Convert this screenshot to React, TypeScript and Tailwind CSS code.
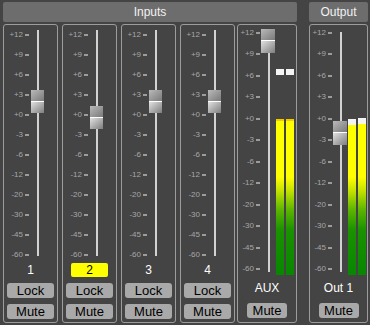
const SCALE = ['+12', '+9', '+6', '+3', '+0', '-3', '-6', '-12', '-20', '-30', '-45', '-60'];

const INPUTS = [
  { name: '1', thumb: 65, active: false },
  { name: '2', thumb: 81, active: true },
  { name: '3', thumb: 65, active: false },
  { name: '4', thumb: 65, active: false },
];

function Scale({ className }: { className: string }) {
  return (
    <div className={`flex shrink-0 flex-col justify-between ${className}`}>
      {SCALE.map((s) => (
        <div key={s} className="flex h-[12px] items-center justify-end">
          <span className="text-[8px] leading-none text-[#a6a6aa]">{s}</span>
          <span className="ml-[2px] h-[2px] w-[4px] bg-[#9c9c9c]" />
        </div>
      ))}
    </div>
  );
}

function Thumb({ top, wide }: { top: number; wide?: boolean }) {
  return (
    <div
      className={`absolute left-0 flex flex-col ${wide ? 'h-[24px] w-[14px]' : 'h-[23px] w-[13px]'}`}
      style={{ top }}
    >
      <div className="h-[11px] bg-linear-to-br from-[#bababa] to-[#7a7a7a]" />
      <div className="h-px bg-white" />
      <div className="flex-1 bg-linear-to-br from-[#e2e2e2] to-[#7e7e7e]" />
    </div>
  );
}

function Btn({ className, children }: { className: string; children: string }) {
  return (
    <div
      className={`h-[15px] rounded-[3px] bg-[#a9a9a9] text-center text-[13px] leading-[15px] text-black ${className}`}
    >
      {children}
    </div>
  );
}

function Meter({ peak, level, cap }: { peak: number; level: number; cap?: boolean }) {
  return (
    <div className="flex w-[8px] flex-col">
      <div className="h-[6px] shrink-0 bg-[#f4f4f4]" style={{ marginTop: peak }} />
      <div
        className={`shrink-0 bg-[linear-gradient(to_top,#078600_0px,#1a9200_45px,#5cb400_65px,#c8e400_85px,#ffff00_98px,#ffff00_100%)] ${
          cap ? 'border-t-2 border-[#f5c800]' : ''
        }`}
        style={{ marginTop: level - peak - 6, height: 250 - level }}
      />
    </div>
  );
}

function InputStrip({ name, thumb, active }: { name: string; thumb: number; active: boolean }) {
  return (
    <div className="flex h-[299px] w-[55px] flex-col rounded-[3px] border border-[#9c9c9c]">
      <div className="flex h-[238px]">
        <Scale className="mt-[4px] h-[232px] w-[25px]" />
        <div className="relative ml-[2px] w-[13px]">
          <div className="absolute left-[6px] top-[5px] h-[226px] w-[2px] bg-[#d2d2d2]" />
          <Thumb top={thumb} />
        </div>
      </div>
      <div
        className={
          active
            ? 'mx-auto h-[14px] w-[37px] rounded-[2px] bg-[#ffff00] text-center text-[12px] leading-[14px] text-black'
            : 'mx-auto h-[14px] w-[37px] text-center text-[12px] leading-[14px] text-white'
        }
      >
        {name}
      </div>
      <Btn className="mx-[3px] mt-[6px]">Lock</Btn>
      <Btn className="mx-[3px] mt-[6px]">Mute</Btn>
    </div>
  );
}

function MasterStrip({
  name,
  thumb,
  className,
  meters,
}: {
  name: string;
  thumb: number;
  className: string;
  meters: { peak: number; level: number; cap?: boolean }[];
}) {
  return (
    <div className={`flex h-[299px] flex-col rounded-[3px] border border-[#9c9c9c] ${className}`}>
      <div className="flex h-[256px]">
        <Scale className="mt-[2px] h-[248px] w-[22px]" />
        <div className="relative ml-[1px] w-[14px]">
          <div className="absolute left-[7px] top-[7px] h-[240px] w-[2px] bg-[#d2d2d2]" />
          <Thumb top={thumb} wide />
        </div>
        <div className="ml-[1px] flex gap-[2px]">
          {meters.map((m, i) => (
            <Meter key={i} {...m} />
          ))}
        </div>
      </div>
      <div className="h-[14px] text-center text-[12px] leading-[14px] text-white">{name}</div>
      <Btn className="mx-auto mt-[8px] w-[40px]">Mute</Btn>
    </div>
  );
}

export default function App() {
  return (
    <div className="flex h-[325px] w-[370px] gap-[12px] overflow-hidden bg-[#444444] pl-[3px] pt-[2px] font-['Liberation_Sans',Arial,sans-serif]">
      {/* Inputs */}
      <div className="flex w-[294px] flex-col">
        <div className="h-[20px] rounded-[2px] bg-[#6d6d6d] text-center text-[12px] leading-[20px] text-[#f2f2f2]">
          Inputs
        </div>
        <div className="mt-[2px] flex">
          <div className="flex gap-[4px]">
            {INPUTS.map((c) => (
              <InputStrip key={c.name} {...c} />
            ))}
          </div>
          <MasterStrip
            name="AUX"
            thumb={4}
            className="ml-[2px] w-[60px]"
            meters={[
              { peak: 44, level: 94, cap: true },
              { peak: 44, level: 94, cap: true },
            ]}
          />
        </div>
      </div>

      {/* Output */}
      <div className="flex w-[59px] flex-col">
        <div className="h-[20px] rounded-[2px] bg-[#6d6d6d] text-center text-[12px] leading-[20px] text-[#f2f2f2]">
          Output
        </div>
        <div className="mt-[2px] flex">
          <MasterStrip
            name="Out 1"
            thumb={96}
            className="w-[59px]"
            meters={[
              { peak: 94, level: 100 },
              { peak: 93, level: 99 },
            ]}
          />
        </div>
      </div>
    </div>
  );
}
